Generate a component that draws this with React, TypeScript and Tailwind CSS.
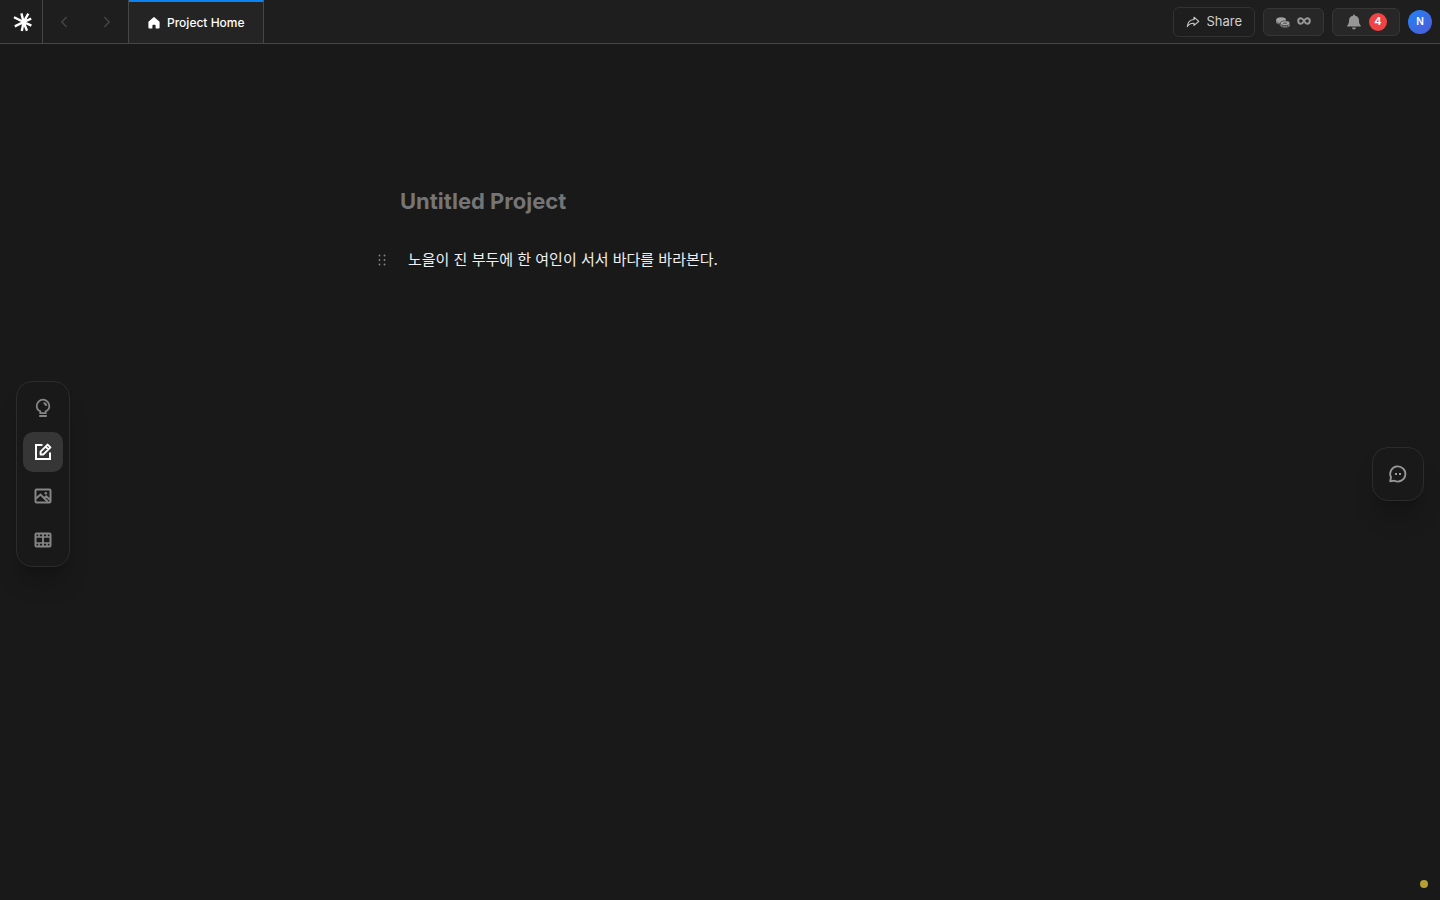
import { ChevronLeft, ChevronRight } from 'lucide-react';

const LogoIcon = () => (
  <svg className="w-5 h-5" viewBox="0 0 20 20" fill="none" stroke="#ffffff" strokeWidth="2.4">
    <path d="M10.6 10 8.4 1.4M10.6 10 15.3 1.7M10.6 10 1 5.2M10.6 10 18.2 6.6M10.6 10 1.8 14.4M10.6 10 18.4 13.6M10.6 10 8.8 18.9M10.6 10 14 18.7" />
  </svg>
);

const HomeIcon = () => (
  <svg className="w-3 h-3" viewBox="0 0 12 12" fill="#ffffff">
    <path d="M5.3.4a1 1 0 0 1 1.4 0l4.6 4.2a1 1 0 0 1 .3.8v5.1a1 1 0 0 1-1 1H8.1a.5.5 0 0 1-.5-.5V8.6a.8.8 0 0 0-.8-.8H5.2a.8.8 0 0 0-.8.8V11a.5.5 0 0 1-.5.5H1.4a1 1 0 0 1-1-1V5.4a1 1 0 0 1 .3-.8z" />
  </svg>
);

const ShareIcon = () => (
  <svg className="w-3.5 h-3.5" viewBox="0 0 14 14" fill="none" stroke="currentColor" strokeWidth="1.1" strokeLinejoin="round">
    <path d="M8 2.2 12.8 6.4 8 10.4V8.2C4.8 8 2.8 9 1.3 11.6 1.6 7.6 4 4.8 8 4.5z" />
  </svg>
);

const CoinsIcon = () => (
  <svg className="w-3.5 h-3.5" viewBox="0 0 14 14">
    <path d="M.2 5v2.2c0 1.3 2 2.3 4.8 2.300s5-1 5-2.300V5z" fill="#8a8a8a" />
    <ellipse cx="5.100" cy="4.800" rx="4.900" ry="2.600" fill="#a3a3a3" />
    <path d="M4.400 8.600v1.600c0 1.400 2 2.400 4.600 2.400s4.800-1 4.800-2.400V8z" fill="#8a8a8a" />
    <ellipse cx="9.100" cy="8.200" rx="4.700" ry="2.400" fill="#a3a3a3" stroke="#272727" strokeWidth=".6" />
    <path d="M7.200 8.200h3.600M1.600 7.600v1M3.200 8v1M6.600 10.800v1.200M9 11.200v1.200M11.400 10.800v1.200" stroke="#333333" strokeWidth=".8" />
  </svg>
);

const InfinityIcon = () => (
  <svg className="w-3.5 h-3.5" viewBox="0 0 14 14" fill="none" stroke="#969696" strokeWidth="2">
    <path d="M7 6C5.900 4.200 5.100 3.300 3.900 3.300a2.700 2.700 0 0 0 0 5.400C5.100 8.700 5.900 7.800 7 6s1.900-2.700 3.100-2.700a2.700 2.700 0 0 1 0 5.400C8.900 8.700 8.100 7.800 7 6z" />
  </svg>
);

const BellIcon = () => (
  <svg className="w-4 h-4" viewBox="0 0 16 16" fill="#969696">
    <path d="M8 .6a1 1 0 0 1 1 1v.2a4.900 4.900 0 0 1 4 4.600c0 2.700.5 3.800 1.700 5a.7.7 0 0 1-.5 1.200H1.800a.7.7 0 0 1-.5-1.200c1.200-1.200 1.700-2.300 1.700-5a4.900 4.900 0 0 1 4-4.600v-.2a1 1 0 0 1 1-1zM6.100 13.500h3.800a1.900 1.900 0 0 1-3.800 0z" />
  </svg>
);

const BulbIcon = () => (
  <svg className="w-5 h-5" viewBox="0 0 20 20" fill="none" stroke="currentColor" strokeWidth="1.800">
    <path d="M7.300 15.200v-1.800C5 12.300 3.700 10.500 3.700 8a6.300 6.300 0 0 1 12.600 0c0 2.500-1.300 4.300-3.600 5.400v1.800zM6.200 18h7.600" />
    <path d="M10.600 5a3.200 3.200 0 0 1 2.700 2.800" />
  </svg>
);

const EditIcon = () => (
  <svg className="w-5 h-5" viewBox="0 0 20 20" fill="none" stroke="currentColor" strokeWidth="2">
    <path d="M9.500 3H3v14h14v-6.500" />
    <path d="M7.600 12.400V9.600L14.600 2.600l2.800 2.800-7 7zM12.600 4.600l2.800 2.800" strokeLinejoin="round" />
  </svg>
);

const ImageIcon = () => (
  <svg className="w-5 h-5" viewBox="0 0 20 20" fill="none" stroke="currentColor" strokeWidth="2">
    <rect x="2.500" y="3.500" width="15" height="13" rx="1" />
    <path d="m3 12.500 4.500-4 7.500 7.500M11.200 12l2-1.600 4.200 3.600" />
    <circle cx="12.800" cy="7.200" r="1.300" fill="currentColor" stroke="none" />
  </svg>
);

const FilmIcon = () => (
  <svg className="w-5 h-5" viewBox="0 0 20 20" fill="none" stroke="currentColor">
    <rect x="2.500" y="3.500" width="15" height="13" rx="1" strokeWidth="2" />
    <path d="M2.500 7h15M2.500 13h15" strokeWidth="1.400" />
    <path d="M10 3.500v13" strokeWidth="1.800" />
    <path d="M6 3.500V7M14 3.500V7M6 13v3.500M14 13v3.500" strokeWidth="1.600" />
  </svg>
);

const CommentIcon = () => (
  <svg className="w-5 h-5" viewBox="0 0 20 20" fill="none" stroke="currentColor" strokeWidth="1.800">
    <path d="M2.200 17.300 3 13.300A7.600 7.600 0 1 1 6.400 16.700z" strokeLinejoin="round" />
    <path d="M7 10h2M11 10h2" strokeWidth="2" />
  </svg>
);

const tools = [
  { name: 'Ideas', icon: BulbIcon, active: false },
  { name: 'Script', icon: EditIcon, active: true },
  { name: 'Images', icon: ImageIcon, active: false },
  { name: 'Video', icon: FilmIcon, active: false }
];

const Header = () => (
  <header className="flex h-11 items-stretch justify-between border-b border-[#464646] bg-[#1e1e1e]">
    <div className="flex">
      <a href="#" aria-label="Home" className="flex w-[43px] items-center justify-center border-r border-[#464646] pl-1">
        <LogoIcon />
      </a>
      <nav className="flex w-[86px] items-center border-r border-[#464646] text-[#464646]">
        <button aria-label="Back" className="flex h-full flex-1 items-center justify-center">
          <ChevronLeft className="w-[18px] h-[18px]" strokeWidth={2} />
        </button>
        <button aria-label="Forward" className="flex h-full flex-1 items-center justify-center">
          <ChevronRight className="w-[18px] h-[18px]" strokeWidth={2} />
        </button>
      </nav>
      <a
        href="#"
        className="flex items-center gap-[7px] border-t-2 border-r border-t-[#0a84f5] border-r-[#464646] bg-[#242424] pr-[18px] pl-[19px] text-xs font-medium text-white"
      >
        <HomeIcon />
        Project Home
      </a>
    </div>

    <div className="flex items-center gap-2 pr-2">
      <button className="flex h-[30px] items-center gap-1.5 rounded-md border border-[#323232] px-3 text-[13px] text-[#d0d0d0]">
        <ShareIcon />
        Share
      </button>
      <button aria-label="Credits" className="flex h-7 items-center gap-[7px] rounded-md border border-[#363636] bg-[#272727] px-3">
        <CoinsIcon />
        <InfinityIcon />
      </button>
      <button aria-label="Notifications" className="flex h-7 items-center gap-[7px] rounded-md border border-[#363636] bg-[#272727] pr-3 pl-[13px]">
        <BellIcon />
        <span className="flex h-[18px] w-[18px] items-center justify-center rounded-full bg-[#f04343] text-[11px] font-semibold text-white">
          4
        </span>
      </button>
      <button
        aria-label="Account"
        className="flex h-6 w-6 items-center justify-center rounded-full bg-linear-to-br from-[#0a84f5] to-[#4a58d8] text-[10px] font-semibold text-white"
      >
        N
      </button>
    </div>
  </header>
);

const App = () => {
  return (
    <div className="flex min-h-screen flex-col bg-[#191919] font-['Inter','Noto_Sans_CJK_KR',sans-serif]">
      <Header />

      <main className="mx-auto w-full max-w-[640px] flex-1 pt-[141px]">
        <h1 className="text-[22px] leading-8 font-bold text-[#757575]">Untitled Project</h1>
        <div className="-ml-6 mt-[29px] flex items-center gap-5">
          <svg className="w-3 h-3.5 text-[#888888]" viewBox="0 0 12 14" fill="currentColor">
            {[2.5, 7, 11.5].map((y) => (
              <g key={y}>
                <circle cx="3.500" cy={y} r="0.900" />
                <circle cx="8.500" cy={y} r="0.900" />
              </g>
            ))}
          </svg>
          <p className="text-[15px] leading-7 text-[#f0f0f0]">노을이 진 부두에 한 여인이 서서 바다를 바라본다.</p>
        </div>
      </main>

      {/* Floating tool bar */}
      <aside className="fixed top-12 bottom-0 left-4 flex items-center">
        <div className="flex flex-col gap-1 rounded-2xl border border-[#2c2c2c] bg-[#191919] p-1.5 shadow-xl shadow-black/20">
          {tools.map(({ name, icon: Icon, active }) => (
            <button
              key={name}
              aria-label={name}
              className={`flex h-10 w-10 items-center justify-center rounded-[10px] ${active ? 'bg-[#363636] text-white' : 'text-[#858585]'}`}
            >
              <Icon />
            </button>
          ))}
        </div>
      </aside>

      {/* Comments */}
      <aside className="fixed top-12 right-4 bottom-0 flex items-center">
        <button
          aria-label="Comments"
          className="flex h-[54px] w-[52px] items-center justify-center rounded-2xl border border-[#2c2c2c] bg-[#191919] text-[#999999] shadow-xl shadow-black/20"
        >
          <CommentIcon />
        </button>
      </aside>

      <span className="fixed right-3 bottom-3 h-2 w-2 rounded-full bg-[#b5a030]" />
    </div>
  );
};

export default App;
